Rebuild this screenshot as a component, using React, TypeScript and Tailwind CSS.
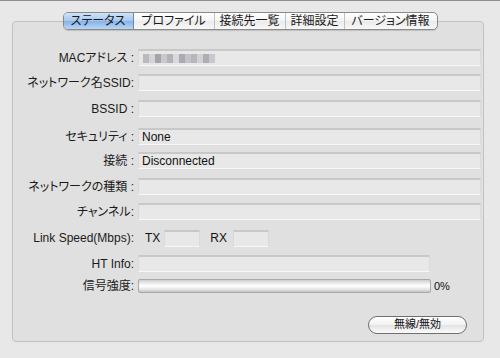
import React from 'react';

type RowType = {
  label: string;
  value?: string;
  top: string;
  kind: 'field' | 'mac' | 'link' | 'short' | 'signal';
};

const TABS = [
  { label: 'ステータス', width: 'w-[70px]', selected: true },
  { label: 'プロファイル', width: 'w-[81px]', selected: false },
  { label: '接続先一覧', width: 'w-[71px]', selected: false },
  { label: '詳細設定', width: 'w-[59px]', selected: false },
  { label: 'バージョン情報', width: 'w-[92px]', selected: false },
];

const ROWS: RowType[] = [
  { label: 'MACアドレス :', kind: 'mac', top: 'mt-[27px]' },
  { label: 'ネットワーク名SSID:', kind: 'field', top: 'mt-[8px]' },
  { label: 'BSSID :', kind: 'field', top: 'mt-[9px]' },
  { label: 'セキュリティ :', value: 'None', kind: 'field', top: 'mt-[11px]' },
  { label: '接続 :', value: 'Disconnected', kind: 'field', top: 'mt-[7px]' },
  { label: 'ネットワークの種類 :', kind: 'field', top: 'mt-[9px]' },
  { label: 'チャンネル:', kind: 'field', top: 'mt-[8px]' },
  { label: 'Link Speed(Mbps):', kind: 'link', top: 'mt-[9px]' },
  { label: 'HT Info:', kind: 'short', top: 'mt-[8px]' },
  { label: '信号強度:', kind: 'signal', top: 'mt-[6px]' },
];

// blurred MAC address blocks
const MAC_BLOCKS = [
  'bg-[#b5b6bc]', 'bg-[#d2d2d6]', 'bg-[#9c9da6]', 'bg-[#c6c6cb]', 'bg-[#acaeb4]',
  'bg-[#d8d8db]', 'bg-[#a4a5ad]', 'bg-[#bfc0c5]', 'bg-[#b1b2b8]', 'bg-[#d0d0d4]',
  'bg-[#a7a8b0]', 'bg-[#c5c5ca]',
];

const Field = ({ className, children }: { className: string; children?: React.ReactNode }) => (
  <div
    className={`${className} flex h-[17px] items-center border-t-2 border-b border-x border-t-[#c8c8c8] border-b-[#f7f7f7] border-x-[#dadada] bg-[#e8e8e8] pl-[3px] text-[12px] text-[#111]`}
  >
    {children}
  </div>
);

const Row = ({ row }: { row: RowType }) => (
  <div className={`${row.top} flex items-center`}>
    <div className="w-[121px] shrink-0 text-right text-[12px] leading-none text-[#1b1b1b]">
      {row.label}
    </div>
    <div className="ml-[4px] flex flex-1 items-center">
      {row.kind === 'field' && <Field className="mr-[2px] flex-1">{row.value}</Field>}
      {row.kind === 'mac' && (
        <Field className="mr-[2px] flex-1">
          <div className="ml-[1px] flex h-[9px] opacity-90">
            {MAC_BLOCKS.map((c, i) => (
              <span key={i} className={`${c} h-full w-[6px]`} />
            ))}
          </div>
        </Field>
      )}
      {row.kind === 'link' && (
        <div className="flex items-center">
          <span className="ml-[7px] text-[12px] text-[#111]">TX</span>
          <Field className="ml-[4px] w-[36px]" />
          <span className="ml-[10px] text-[12px] text-[#111]">RX</span>
          <Field className="ml-[6px] w-[36px]" />
        </div>
      )}
      {row.kind === 'short' && <Field className="w-[292px]" />}
      {row.kind === 'signal' && (
        <div className="flex items-center">
          <div className="h-[14px] w-[293px] rounded-[2px] border border-[#a8a8a8] bg-[linear-gradient(#cfcfcf,#f4f4f4_35%,#ffffff_50%,#e2e2e2_80%,#c4c4c4)]" />
          <span className="ml-[3px] text-[11px] text-[#111]">0%</span>
        </div>
      )}
    </div>
  </div>
);

const App = () => {
  return (
    <div
      className="h-[358px] w-[500px] overflow-hidden border-t border-t-[#8c8c8c] bg-[#e8e8e8] pt-[11px] [font-feature-settings:'palt']"
      style={{ fontFamily: '"Liberation Sans", "Noto Sans CJK JP", sans-serif' }}
    >
      <div className="relative z-10 -mb-[9px] flex justify-center">
        <div className="flex h-[18px] overflow-hidden rounded-[5px] border border-[#8a8a8a] bg-[linear-gradient(#ffffff,#f4f4f4_50%,#eaeaea_51%,#f8f8f8)] shadow-[0_1px_1px_rgba(0,0,0,0.15)]">
          {TABS.map((tab, index) => (
            <div
              key={index}
              className={`${tab.width} flex items-center justify-center text-[12px] leading-none text-[#1a1a1a] ${
                tab.selected
                  ? 'bg-[linear-gradient(#cfe2f8,#a6c8ef_50%,#86b2e8_51%,#b9d6f6)] border-r border-[#6c87ab]'
                  : index < TABS.length - 1
                  ? 'border-r border-[#c2c2c2]'
                  : ''
              }`}
            >
              {tab.label}
            </div>
          ))}
        </div>
      </div>

      <div className="ml-[12px] flex h-[321px] w-[472px] flex-col rounded-[4px] border border-[#c2c2c2] bg-[#e0e0e0]">
        {ROWS.map((row, index) => (
          <Row key={index} row={row} />
        ))}
        <div className="mt-[21px] flex justify-end pr-[16px]">
          <button className="flex h-[18px] w-[99px] items-center justify-center rounded-full border border-[#6f6f6f] bg-[linear-gradient(#ffffff,#f2f2f2_50%,#e3e3e3_51%,#fbfbfb)] text-[11px] leading-none text-[#111]">
            無線/無効
          </button>
        </div>
      </div>
    </div>
  );
};

export default App;
